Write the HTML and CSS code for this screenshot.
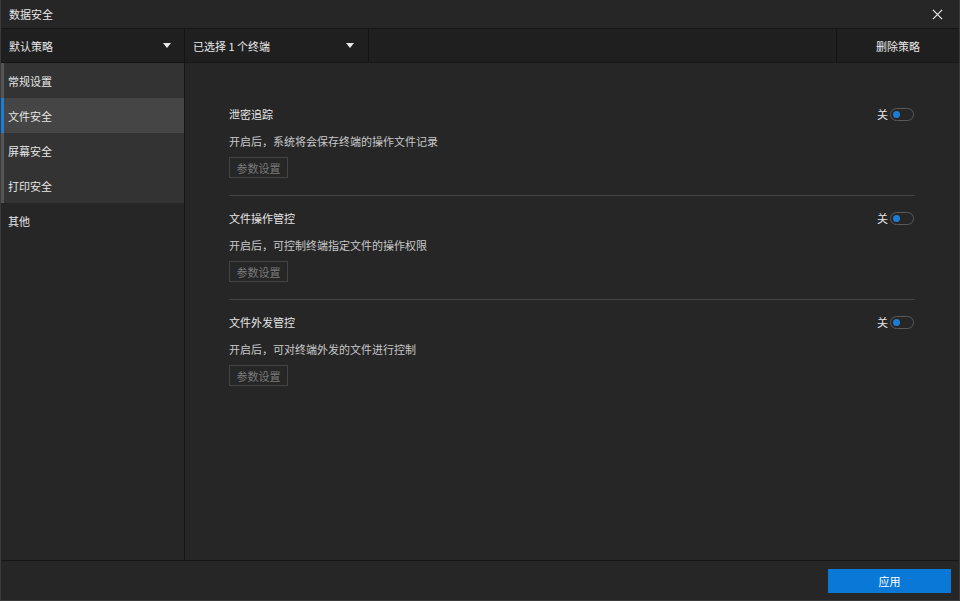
FILE: index.html
```html
<!DOCTYPE html>
<html lang="zh">
<head>
<meta charset="utf-8">
<title>数据安全</title>
<link rel="stylesheet" href="styles.css">
</head>
<body>
<div class="window">
  <header class="titlebar">
    <span class="title">数据安全</span>
    <svg class="close" width="11" height="11" viewBox="0 0 12 12"><path d="M1 1L11 11M11 1L1 11" stroke="#e6e6e6" stroke-width="1.4"/></svg>
  </header>
  <div class="toolbar">
    <div class="dropdown policy">
      <span>默认策略</span>
      <span class="caret"></span>
    </div>
    <div class="dropdown terminals">
      <span>已选择 1 个终端</span>
      <span class="caret"></span>
    </div>
    <div class="spacer"></div>
    <div class="delete">删除策略</div>
  </div>
  <div class="main">
    <nav class="sidebar">
      <div class="group">
        <div class="nav-item">常规设置</div>
        <div class="nav-item active">文件安全</div>
        <div class="nav-item">屏幕安全</div>
        <div class="nav-item">打印安全</div>
      </div>
      <div class="nav-item plain">其他</div>
    </nav>
    <section class="content">
      <div class="setting">
        <div class="setting-head">
          <span class="setting-title">泄密追踪</span>
          <span class="switch"><span class="switch-label">关</span><span class="toggle"><span class="knob"></span></span></span>
        </div>
        <p class="desc">开启后，系统将会保存终端的操作文件记录</p>
        <button class="param">参数设置</button>
      </div>
      <div class="setting">
        <div class="setting-head">
          <span class="setting-title">文件操作管控</span>
          <span class="switch"><span class="switch-label">关</span><span class="toggle"><span class="knob"></span></span></span>
        </div>
        <p class="desc">开启后，可控制终端指定文件的操作权限</p>
        <button class="param">参数设置</button>
      </div>
      <div class="setting last">
        <div class="setting-head">
          <span class="setting-title">文件外发管控</span>
          <span class="switch"><span class="switch-label">关</span><span class="toggle"><span class="knob"></span></span></span>
        </div>
        <p class="desc">开启后，可对终端外发的文件进行控制</p>
        <button class="param">参数设置</button>
      </div>
    </section>
  </div>
  <footer class="footer">
    <button class="apply">应用</button>
  </footer>
</div>
</body>
</html>
```
FILE: styles.css
```css
* { box-sizing: border-box; }
html, body { margin: 0; padding: 0; }
body {
  width: 960px;
  height: 601px;
  background: #262626;
  font-family: "Microsoft YaHei", "Noto Sans CJK SC", "Noto Sans", sans-serif;
  font-size: 11px;
  color: #e0e0e0;
  overflow: hidden;
}
.window {
  width: 960px;
  height: 601px;
  display: flex;
  flex-direction: column;
  border: 1px solid #3a3a3a;
  border-top: none;
  background: #262626;
}
.titlebar {
  height: 29px;
  flex: none;
  display: flex;
  align-items: center;
  justify-content: space-between;
  padding: 0 16px 0 8px;
  background: #262626;
  border-bottom: 1px solid #161616;
}
.title { font-size: 11px; color: #e8e8e8; }
.close { display: block; }
.toolbar {
  height: 34px;
  flex: none;
  display: flex;
  background: #1f1f1f;
  border-bottom: 1px solid #161616;
}
.dropdown {
  display: flex;
  align-items: center;
  justify-content: space-between;
  border-right: 1px solid #141414;
  color: #e8e8e8;
}
.policy { width: 184px; padding: 0 13px 0 8px; }
.terminals { width: 184px; padding: 0 14px 0 8px; }
.caret {
  width: 0; height: 0;
  border-left: 4.5px solid transparent;
  border-right: 4.5px solid transparent;
  border-top: 5px solid #e8e8e8;
}
.spacer { flex: 1; border-right: 1px solid #141414; }
.delete {
  width: 122px;
  display: flex;
  align-items: center;
  justify-content: center;
  color: #e8e8e8;
}
.main { flex: 1; display: flex; min-height: 0; }
.sidebar {
  width: 184px;
  flex: none;
  border-right: 1px solid #161616;
  background: #262626;
}
.group { background: #333333; border-left: 3px solid #555555; }
.nav-item {
  height: 35px;
  display: flex;
  align-items: center;
  padding-left: 4px;
  color: #e6e6e6;
}
.nav-item.active {
  background: #454545;
  margin-left: -3px;
  border-left: 3px solid #1a7fd6;
}
.nav-item.plain { padding-left: 7px; }
.content {
  flex: 1;
  padding: 37px 44px 0 44px;
}
.setting {
  border-bottom: 1px solid #444444;
  padding: 6px 0 17px 0;
  margin-bottom: 8px;
}
.setting.last { border-bottom: none; }
.setting-head {
  display: flex;
  justify-content: space-between;
  align-items: center;
  height: 16px;
}
.setting-title { color: #e6e6e6; }
.switch { display: flex; align-items: center; gap: 2px; margin-right: 1px; }
.switch-label { color: #e6e6e6; }
.toggle {
  width: 24px; height: 13px;
  border: 1px solid #5a5a5a;
  border-radius: 7px;
  display: flex;
  align-items: center;
  padding-left: 2px;
}
.knob { width: 7px; height: 7px; border-radius: 50%; background: #1a7fd6; }
.desc { margin: 11px 0 8px 0; color: #c8c8c8; height: 16px; line-height: 16px; }
.param {
  display: block;
  width: 59px;
  height: 21px;
  padding: 0;
  background: #262626;
  border: 1px solid #444444;
  color: #7a7a7a;
  font-family: inherit;
  font-size: 11px;
}
.footer {
  height: 40px;
  flex: none;
  border-top: 1px solid #161616;
  display: flex;
  justify-content: flex-end;
  align-items: center;
  padding-right: 8px;
}
.apply {
  width: 123px;
  height: 24px;
  background: #0a78d7;
  border: none;
  color: #ffffff;
  font-family: inherit;
  font-size: 11px;
}
```
